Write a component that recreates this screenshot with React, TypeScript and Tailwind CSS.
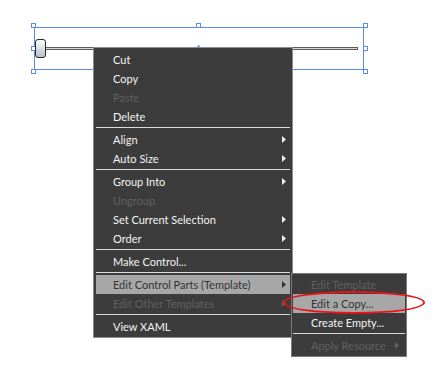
import React from "react";

type Item =
  | { kind: "sep" }
  | { kind: "item"; label: string; disabled?: boolean; sub?: boolean; active?: boolean };

const mainItems: Item[] = [
  { kind: "item", label: "Cut" },
  { kind: "item", label: "Copy" },
  { kind: "item", label: "Paste", disabled: true },
  { kind: "item", label: "Delete" },
  { kind: "sep" },
  { kind: "item", label: "Align", sub: true },
  { kind: "item", label: "Auto Size", sub: true },
  { kind: "sep" },
  { kind: "item", label: "Group Into", sub: true },
  { kind: "item", label: "Ungroup", disabled: true },
  { kind: "item", label: "Set Current Selection", sub: true },
  { kind: "item", label: "Order", sub: true },
  { kind: "sep" },
  { kind: "item", label: "Make Control..." },
  { kind: "sep" },
  { kind: "item", label: "Edit Control Parts (Template)", sub: true, active: true },
  { kind: "item", label: "Edit Other Templates", sub: true, disabled: true },
  { kind: "sep" },
  { kind: "item", label: "View XAML" },
];

const subItems: Item[] = [
  { kind: "item", label: "Edit Template", disabled: true },
  { kind: "item", label: "Edit a Copy...", active: true },
  { kind: "item", label: "Create Empty..." },
  { kind: "sep" },
  { kind: "item", label: "Apply Resource", sub: true, disabled: true },
];

const Arrow = ({ color }: { color: string }) => (
  <svg width="4" height="7" viewBox="0 0 4 7" className="shrink-0">
    <path d="M0 0 L4 3.5 L0 7 Z" fill={color} />
  </svg>
);

const MenuRows = ({ items, textPad, arrowPad }: { items: Item[]; textPad: string; arrowPad: string }) => (
  <>
    {items.map((it, i) =>
      it.kind === "sep" ? (
        <div key={i} className="h-[4px] pt-[1px]">
          <div className="h-px bg-[#dcdcdc]" />
        </div>
      ) : (
        <div
          key={i}
          className={`flex h-[19px] items-center justify-between ${textPad} ${arrowPad} ${
            it.active ? "bg-[#a7a7a7] text-[#333333]" : it.disabled ? "text-[#606060]" : "text-[#f4f4f4]"
          }`}
        >
          <span className="whitespace-nowrap leading-none">{it.label}</span>
          {it.sub && <Arrow color={it.disabled ? "#606060" : it.active ? "#333333" : "#f0f0f0"} />}
        </div>
      )
    )}
  </>
);

const Handle = ({ cls }: { cls: string }) => (
  <div className={`absolute h-[5px] w-[5px] border border-[#5a8ee6] bg-white ${cls}`} />
);

export default function App() {
  return (
    <div className="relative h-[388px] w-[443px] overflow-hidden bg-white font-['Lato',sans-serif] text-[11px]">
      {/* selected slider on the design surface */}
      <div className="absolute left-[34px] top-[27px] flex h-[43px] w-[330px] items-center border border-[#5a8ee6] pr-[5px]">
        <div className="relative z-10 h-[19px] w-[11px] shrink-0 rounded-[3px] border border-[#2a2a2a] bg-gradient-to-b from-[#ffffff] to-[#b9bfc6]" />
        <div className="-ml-[2px] h-[3px] flex-1 border border-[#5a5a5a] bg-[#d9d9d9]" />
        <Handle cls="-left-[4px] -top-[5px]" />
        <Handle cls="left-[161px] -top-[5px]" />
        <Handle cls="-right-[5px] -top-[5px]" />
        <Handle cls="-left-[4px] top-[18px]" />
        <Handle cls="-right-[5px] top-[18px]" />
        <Handle cls="-left-[4px] -bottom-[5px]" />
        <Handle cls="left-[161px] -bottom-[5px]" />
        <Handle cls="-right-[5px] -bottom-[5px]" />
        <div className="absolute left-[162px] top-[17px] h-[2px] w-[3px] rounded-t-full bg-[#7ea1e8]" />
      </div>

      {/* main context menu */}
      <div className="absolute left-[93px] top-[47px] z-20 w-[200px] border border-[#8c8c8c] bg-[#3c3c3c] px-[2px] pb-[1px] pt-[2px]">
        <MenuRows items={mainItems} textPad="pl-[17px]" arrowPad="pr-[4px]" />
      </div>

      {/* submenu */}
      <div className="absolute left-[291px] top-[273px] z-30 w-[116px] border border-[#7a7a7a] bg-[#3c3c3c] p-[1px]">
        <MenuRows items={subItems} textPad="pl-[18px]" arrowPad="pr-[6px]" />
      </div>

      {/* red annotation ellipse */}
      <div className="absolute left-[283px] top-[291px] z-40 h-[23px] w-[142px] rounded-[50%] border-[2.5px] border-[#e8141b]" />
    </div>
  );
}
